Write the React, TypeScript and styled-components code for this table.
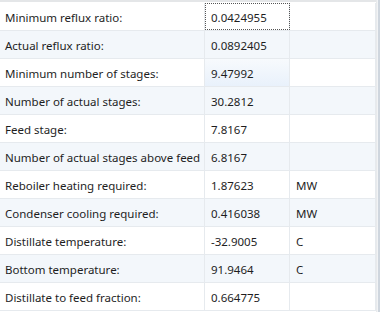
import styled, { createGlobalStyle } from "styled-components";

const GlobalStyle = createGlobalStyle`
  html, body {
    margin: 0;
    padding: 0;
    background: #ffffff;
  }
  body {
    font-family: "Noto Sans", "Open Sans", sans-serif;
    font-size: 11.5px;
    color: #1e1e1e;
  }
`;

const Frame = styled.div`
  width: 380px;
  height: 312px;
  overflow: hidden;
  display: flex;
  background: #ffffff;
`;

const Table = styled.div`
  width: 376px;
  display: flex;
  flex-direction: column;
  border-top: 2px solid #e4e6e8;
  padding-top: 1px;
`;

const ScrollEdge = styled.div`
  width: 4px;
  display: flex;
  border-left: 1px solid #e8eaec;
  background: #f1f3f5;
  & > div {
    margin-left: auto;
    width: 2px;
    background: #cfd6de;
  }
`;

const Row = styled.div<{ $alt: boolean }>`
  display: grid;
  grid-template-columns: 205px 85px 86px;
  height: 28px;
  box-sizing: border-box;
  border-bottom: 1px solid #e6eaee;
  background: ${(p) => (p.$alt ? "#f3f7fb" : "#ffffff")};
`;

const Cell = styled.div<{ $focus?: boolean; $hover?: boolean }>`
  display: flex;
  align-items: center;
  box-sizing: border-box;
  padding-left: 6px;
  padding-top: 1px;
  border-right: 1px solid #e6eaee;
  white-space: nowrap;
  overflow: hidden;
  ${(p) =>
    p.$focus &&
    `
    outline: 1px dotted #555;
    outline-offset: -1px;
  `}
  ${(p) =>
    p.$hover &&
    `
    background: linear-gradient(#f7fafd, #e9f1fb);
  `}
`;

const Label = styled(Cell)`
  padding-left: 5px;
`;

const rows: [string, string, string][] = [
  ["Minimum reflux ratio:", "0.0424955", ""],
  ["Actual reflux ratio:", "0.0892405", ""],
  ["Minimum number of stages:", "9.47992", ""],
  ["Number of actual stages:", "30.2812", ""],
  ["Feed stage:", "7.8167", ""],
  ["Number of actual stages above feed", "6.8167", ""],
  ["Reboiler heating required:", "1.87623", "MW"],
  ["Condenser cooling required:", "0.416038", "MW"],
  ["Distillate temperature:", "-32.9005", "C"],
  ["Bottom temperature:", "91.9464", "C"],
  ["Distillate to feed fraction:", "0.664775", ""],
];

export default function App() {
  return (
    <Frame>
      <GlobalStyle />
      <Table>
        {rows.map(([label, value, unit], i) => (
          <Row key={label} $alt={i % 2 === 1}>
            <Label>{label}</Label>
            <Cell $focus={i === 0} $hover={i === 2}>
              {value}
            </Cell>
            <Cell>{unit}</Cell>
          </Row>
        ))}
      </Table>
      <ScrollEdge>
        <div />
      </ScrollEdge>
    </Frame>
  );
}
